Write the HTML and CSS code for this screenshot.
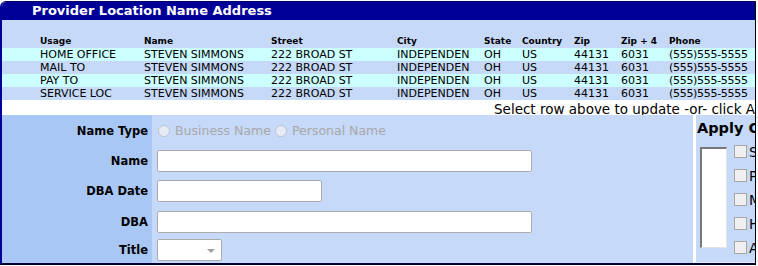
FILE: index.html
```html
<!DOCTYPE html>
<html lang="en">
<head>
    <meta charset="UTF-8">
    <title>Provider Location Name Address</title>
    <link rel="stylesheet" href="styles.css">
</head>
<body>

<div class="panel">
    <div class="panel-title">Provider Location Name Address</div>

    <div class="grid">
        <div class="grid-row grid-head">
            <span>Usage</span><span>Name</span><span>Street</span><span>City</span><span>State</span>
            <span>Country</span><span>Zip</span><span>Zip + 4</span><span>Phone</span>
        </div>
        <div class="grid-row odd">
            <span>HOME OFFICE</span><span>STEVEN SIMMONS</span><span>222 BROAD ST</span><span>INDEPENDEN</span><span>OH</span>
            <span>US</span><span>44131</span><span>6031</span><span class="phone">(555)555-5555</span>
        </div>
        <div class="grid-row even">
            <span>MAIL TO</span><span>STEVEN SIMMONS</span><span>222 BROAD ST</span><span>INDEPENDEN</span><span>OH</span>
            <span>US</span><span>44131</span><span>6031</span><span class="phone">(555)555-5555</span>
        </div>
        <div class="grid-row odd">
            <span>PAY TO</span><span>STEVEN SIMMONS</span><span>222 BROAD ST</span><span>INDEPENDEN</span><span>OH</span>
            <span>US</span><span>44131</span><span>6031</span><span class="phone">(555)555-5555</span>
        </div>
        <div class="grid-row even">
            <span>SERVICE LOC</span><span>STEVEN SIMMONS</span><span>222 BROAD ST</span><span>INDEPENDEN</span><span>OH</span>
            <span>US</span><span>44131</span><span>6031</span><span class="phone">(555)555-5555</span>
        </div>
    </div>

    <div class="notice">Select row above to update -or- click Add to create a new name address</div>

    <div class="editor">
        <div class="form">
            <div class="label">Name Type</div>
            <div class="field radios">
                <label class="radio"><input type="radio" name="ntype" disabled> Business Name</label>
                <label class="radio"><input type="radio" name="ntype" disabled> Personal Name</label>
            </div>

            <div class="label">Name</div>
            <div class="field"><input type="text" class="text wide"></div>

            <div class="label">DBA Date</div>
            <div class="field"><input type="text" class="text date"></div>

            <div class="label">DBA</div>
            <div class="field"><input type="text" class="text wide"></div>

            <div class="label">Title</div>
            <div class="field"><div class="select"><span class="caret"></span></div></div>
        </div>

        <div class="apply">
            <div class="apply-title">Apply Changes To</div>
            <div class="apply-body">
                <div class="apply-list"></div>
                <div class="apply-checks">
                    <label class="check"><span class="box"></span>SERVICE LOC</label>
                    <label class="check"><span class="box"></span>PAY TO</label>
                    <label class="check"><span class="box"></span>MAIL TO</label>
                    <label class="check"><span class="box"></span>HOME OFFICE</label>
                    <label class="check"><span class="box"></span>ALL</label>
                </div>
            </div>
        </div>
    </div>
</div>

</body>
</html>
```

FILE: styles.css
```css
body {
    margin: 0;
    padding-top: 1px;
    background-color: #fff;
    font-family: "DejaVu Sans", Verdana, sans-serif;
    color: #000;
}

.panel {
    width: 753px;
    border-top: 1px solid #000066;
    border-left: 2px solid #000099;
    border-right: 1px solid #000;
    border-bottom: 2px solid #000033;
    border-top-left-radius: 6px;
    overflow: hidden;
}

.panel-title {
    height: 18px;
    line-height: 18px;
    background-color: #000099;
    color: #fff;
    font-size: 13px;
    font-weight: bold;
    padding-left: 30px;
    white-space: nowrap;
}

/* tabela de enderecos */
.grid {
    background-color: #c6d9f8;
    padding-top: 15px;
}

.grid-row {
    display: grid;
    grid-template-columns: 104px 127px 126px 87px 38px 52px 47px 48px 1fr;
    padding-left: 38px;
    height: 13px;
    line-height: 13px;
    font-size: 11px;
    white-space: nowrap;
    cursor: pointer;
}

.grid-head {
    font-size: 9px;
    font-weight: bold;
    cursor: default;
}

.phone {
    letter-spacing: -0.3px;
}

.odd {
    background-color: #ccffff;
}

.even {
    background-color: #c6d9f8;
}

.notice {
    height: 13px;
    padding-top: 2px;
    line-height: 15px;
    background-color: #fff;
    font-size: 13.5px;
    padding-left: 492px;
    white-space: nowrap;
    overflow: hidden;
}

/* area de edicao */
.editor {
    display: flex;
    height: 148px;
    background-color: #c6d9f8;
}

.form {
    width: 691px;
    display: grid;
    grid-template-columns: 150px 1fr;
    grid-template-rows: 31px 29px 31px 31px 26px;
}

.label {
    background-color: #a9c7f5;
    font-size: 11.5px;
    font-weight: bold;
    text-align: right;
    padding-right: 4px;
    display: flex;
    align-items: center;
    justify-content: flex-end;
}

.field {
    display: flex;
    align-items: center;
    padding-left: 5px;
}

.radios {
    padding-left: 3px;
}

.radio {
    color: #a8a8a8;
    font-size: 12.5px;
    display: flex;
    align-items: center;
    margin-right: 1px;
}

.radio input {
    margin: 0 5px 0 3px;
    width: 12px;
    height: 12px;
}

.text {
    height: 22px;
    box-sizing: border-box;
    border: 1px solid #acacac;
    border-radius: 2px;
    background-color: #fff;
    padding: 0 3px;
    margin: 0;
}

.wide {
    width: 375px;
}

.date {
    width: 165px;
}

.select {
    width: 65px;
    height: 22px;
    box-sizing: border-box;
    border: 1px solid #acacac;
    border-radius: 2px;
    background-color: #fff;
    position: relative;
}

.caret {
    position: absolute;
    right: 6px;
    top: 9px;
    border-left: 4px solid transparent;
    border-right: 4px solid transparent;
    border-top: 4px solid #a0a0a0;
}

/* painel lateral */
.apply {
    flex: 1;
    border-left: 3px solid #fff;
    border-bottom: 1px solid #e6eefb;
    padding-left: 1px;
    overflow: hidden;
    white-space: nowrap;
}

.apply-title {
    font-size: 14.5px;
    font-weight: bold;
    margin-top: 5px;
    height: 22px;
}

.apply-body {
    display: flex;
    padding-left: 3px;
    padding-top: 5px;
}

.apply-list {
    width: 24px;
    height: 98px;
    flex-shrink: 0;
    background-color: #fff;
    border-top: 2px solid #777;
    border-left: 2px solid #777;
    border-right: 1px solid #e3e3e3;
    border-bottom: 1px solid #e3e3e3;
}

.apply-checks {
    padding-left: 7px;
    margin-top: -2px;
    display: flex;
    flex-direction: column;
    gap: 11px;
}

.check {
    display: flex;
    align-items: center;
    height: 13px;
    font-size: 14px;
}

.box {
    width: 11px;
    height: 11px;
    flex-shrink: 0;
    border: 1px solid #a6a6a6;
    background-color: #f0f0f0;
    margin-right: 2px;
}
```
